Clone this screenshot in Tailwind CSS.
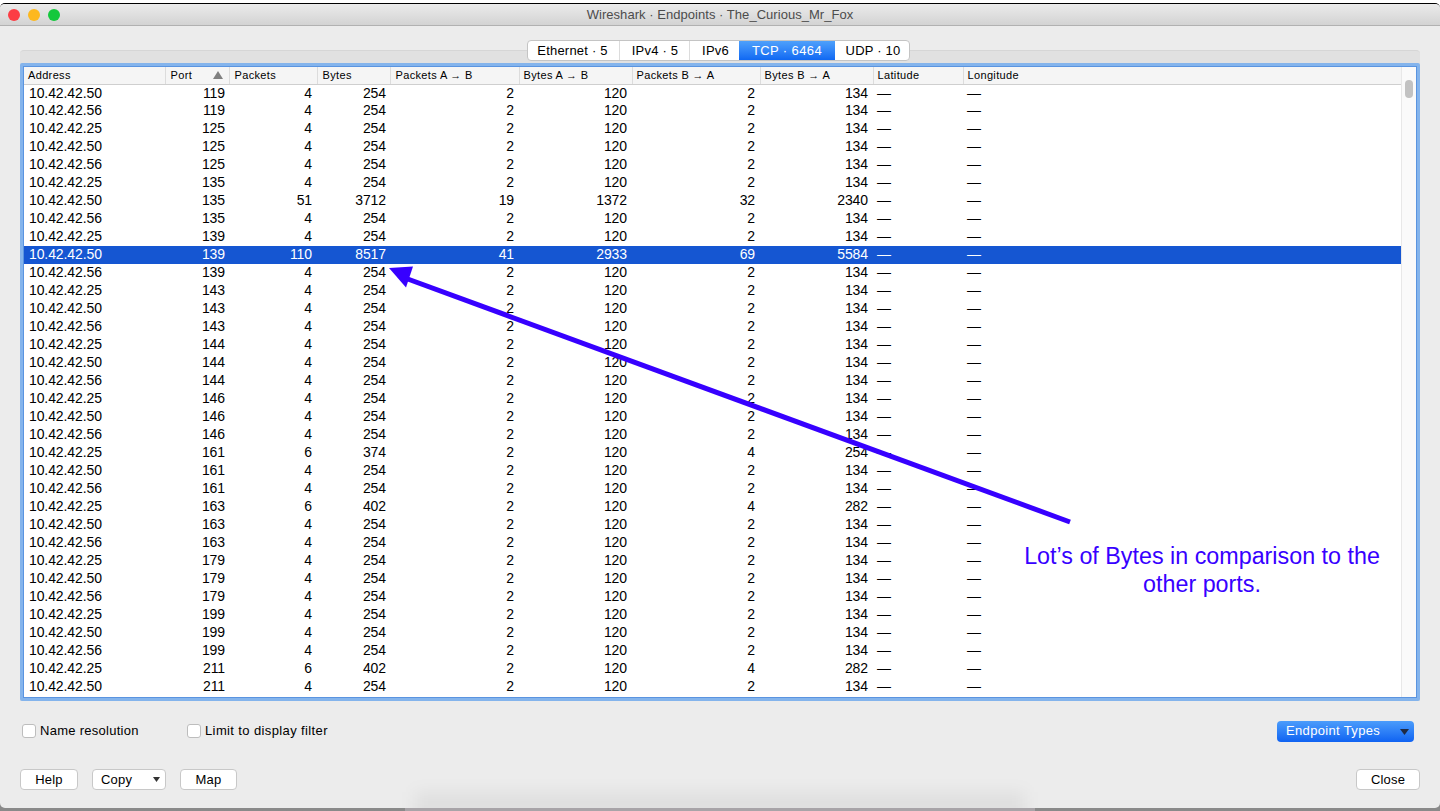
<!DOCTYPE html>
<html lang="en">
<head>
<meta charset="utf-8">
<title>Wireshark · Endpoints · The_Curious_Mr_Fox</title>
<script src="https://cdn.jsdelivr.net/npm/@tailwindcss/browser@4"></script>
</head>
<body class="w-[1440px] h-[811px] overflow-hidden bg-white font-['Liberation_Sans',Arial,sans-serif] text-black">
<div class="relative w-[1440px] h-[811px] pt-[3px] bg-gradient-to-b from-white from-[99%] to-[#8a8a8a] to-[99%]">
  <div class="absolute left-[405px] top-[808px] w-[630px] h-[3px] bg-[#a8a4a8]"></div>
  <div class="relative flex flex-col h-[805px] bg-[#ececec] rounded-t-[5px] rounded-b-[5px] border-t border-black overflow-hidden">
    <header class="relative flex items-center justify-center h-[22px] bg-gradient-to-b from-[#ebebeb] to-[#d3d3d3] border-b border-[#b1b1b1] text-[13px] text-[#4c4c4c] shrink-0">
      <div class="absolute left-[8px] top-[5px] flex gap-[8px]">
        <span class="w-[12px] h-[12px] rounded-full bg-[#fc3d44]"></span>
        <span class="w-[12px] h-[12px] rounded-full bg-[#fdb81e]"></span>
        <span class="w-[12px] h-[12px] rounded-full bg-[#14c83c]"></span>
      </div>
      <span class="tracking-[0.04px]">Wireshark · Endpoints · The_Curious_Mr_Fox</span>
    </header>

    <main class="relative px-[20px] pt-[24px] flex-1">
      <div class="relative h-[651px] rounded-t-[4px] bg-[#e1e1e1] border-t border-[#d6d6d6] pt-[12px]">
        <nav class="absolute left-[507px] top-[-11px] flex h-[21px] rounded-[4px] bg-white border border-[#c4c4c4] text-[13px] leading-[19px] z-10 overflow-hidden whitespace-nowrap">
          <span class="w-[91px] pr-[2px] text-center tracking-[0.2px]">Ethernet · 5</span>
          <span class="w-[70px] pl-[1px] border-l border-[#dcdcdc] text-center tracking-[0.2px]">IPv4 · 5</span>
          <span class="w-[50px] pl-[2px] border-l border-[#dcdcdc] text-center tracking-[0.2px]">IPv6</span>
          <span class="w-[96px] text-center text-white bg-gradient-to-b from-[#4ea0fb] to-[#0f68f3] tracking-[0.4px]">TCP · 6464</span>
          <span class="w-[74px] pl-[2px] text-center tracking-[0.2px]">UDP · 10</span>
        </nav>

        <div class="h-[638px] border-[3px] border-[#84b4ec] rounded-[2px] bg-white">
          <div class="relative h-full border border-[#5a94e0] overflow-hidden">
            <div class="absolute right-0 top-0 bottom-0 w-[15px] bg-[#fafafa] border-l border-[#e8e8e8] z-[5]">
              <div class="absolute left-[3px] top-[13px] w-[8px] h-[18px] rounded-full bg-[#c2c2c2]"></div>
            </div>
            <table class="table-fixed border-collapse w-[1377px] text-[14px] leading-[16px] tracking-[-0.1px] [&_td]:h-[18px] [&_td]:align-top [&_td]:p-0 [&_td]:pr-[5px] [&_td]:text-right [&_td:nth-child(1)]:text-left [&_td:nth-child(1)]:pl-[5px] [&_td:nth-child(2)]:pr-[4px] [&_td:nth-child(4)]:pr-[4px] [&_td:nth-child(n+9)]:text-left [&_td:nth-child(n+9)]:pl-[4px] [&_th]:h-[17px] [&_th]:text-left [&_th]:font-normal [&_th]:text-[11px] [&_th]:pl-[4px] [&_th:nth-child(n+2):nth-child(-n+5)]:pl-[5px] [&_th]:tracking-[0.35px] [&_th]:bg-[#f5f5f5] [&_th]:border-b [&_th]:border-[#cfcfcf] [&_th+th]:border-l [&_th+th]:border-l-[#dcdcdc]">
              <colgroup>
                <col class="w-[141px]"><col class="w-[64px]"><col class="w-[88px]"><col class="w-[73px]"><col class="w-[129px]"><col class="w-[113px]"><col class="w-[128px]"><col class="w-[113px]"><col class="w-[90px]"><col class="w-[438px]">
              </colgroup>
              <thead>
                <tr><th>Address</th><th><span class="flex items-center justify-between pr-[6px]">Port<svg width="10" height="8" viewBox="0 0 10 8"><path d="M5 0 L10 8 L0 8 Z" fill="#808080"/></svg></span></th><th>Packets</th><th>Bytes</th><th>Packets A → B</th><th>Bytes A → B</th><th>Packets B → A</th><th>Bytes B → A</th><th>Latitude</th><th>Longitude</th></tr>
              </thead>
              <tbody>
                <tr><td>10.42.42.50</td><td>119</td><td>4</td><td>254</td><td>2</td><td>120</td><td>2</td><td>134</td><td>—</td><td>—</td></tr>
                <tr><td>10.42.42.56</td><td>119</td><td>4</td><td>254</td><td>2</td><td>120</td><td>2</td><td>134</td><td>—</td><td>—</td></tr>
                <tr><td>10.42.42.25</td><td>125</td><td>4</td><td>254</td><td>2</td><td>120</td><td>2</td><td>134</td><td>—</td><td>—</td></tr>
                <tr><td>10.42.42.50</td><td>125</td><td>4</td><td>254</td><td>2</td><td>120</td><td>2</td><td>134</td><td>—</td><td>—</td></tr>
                <tr><td>10.42.42.56</td><td>125</td><td>4</td><td>254</td><td>2</td><td>120</td><td>2</td><td>134</td><td>—</td><td>—</td></tr>
                <tr><td>10.42.42.25</td><td>135</td><td>4</td><td>254</td><td>2</td><td>120</td><td>2</td><td>134</td><td>—</td><td>—</td></tr>
                <tr><td>10.42.42.50</td><td>135</td><td>51</td><td>3712</td><td>19</td><td>1372</td><td>32</td><td>2340</td><td>—</td><td>—</td></tr>
                <tr><td>10.42.42.56</td><td>135</td><td>4</td><td>254</td><td>2</td><td>120</td><td>2</td><td>134</td><td>—</td><td>—</td></tr>
                <tr><td>10.42.42.25</td><td>139</td><td>4</td><td>254</td><td>2</td><td>120</td><td>2</td><td>134</td><td>—</td><td>—</td></tr>
                <tr class="bg-[#1556d2] text-white"><td>10.42.42.50</td><td>139</td><td>110</td><td>8517</td><td>41</td><td>2933</td><td>69</td><td>5584</td><td>—</td><td>—</td></tr>
                <tr><td>10.42.42.56</td><td>139</td><td>4</td><td>254</td><td>2</td><td>120</td><td>2</td><td>134</td><td>—</td><td>—</td></tr>
                <tr><td>10.42.42.25</td><td>143</td><td>4</td><td>254</td><td>2</td><td>120</td><td>2</td><td>134</td><td>—</td><td>—</td></tr>
                <tr><td>10.42.42.50</td><td>143</td><td>4</td><td>254</td><td>2</td><td>120</td><td>2</td><td>134</td><td>—</td><td>—</td></tr>
                <tr><td>10.42.42.56</td><td>143</td><td>4</td><td>254</td><td>2</td><td>120</td><td>2</td><td>134</td><td>—</td><td>—</td></tr>
                <tr><td>10.42.42.25</td><td>144</td><td>4</td><td>254</td><td>2</td><td>120</td><td>2</td><td>134</td><td>—</td><td>—</td></tr>
                <tr><td>10.42.42.50</td><td>144</td><td>4</td><td>254</td><td>2</td><td>120</td><td>2</td><td>134</td><td>—</td><td>—</td></tr>
                <tr><td>10.42.42.56</td><td>144</td><td>4</td><td>254</td><td>2</td><td>120</td><td>2</td><td>134</td><td>—</td><td>—</td></tr>
                <tr><td>10.42.42.25</td><td>146</td><td>4</td><td>254</td><td>2</td><td>120</td><td>2</td><td>134</td><td>—</td><td>—</td></tr>
                <tr><td>10.42.42.50</td><td>146</td><td>4</td><td>254</td><td>2</td><td>120</td><td>2</td><td>134</td><td>—</td><td>—</td></tr>
                <tr><td>10.42.42.56</td><td>146</td><td>4</td><td>254</td><td>2</td><td>120</td><td>2</td><td>134</td><td>—</td><td>—</td></tr>
                <tr><td>10.42.42.25</td><td>161</td><td>6</td><td>374</td><td>2</td><td>120</td><td>4</td><td>254</td><td>—</td><td>—</td></tr>
                <tr><td>10.42.42.50</td><td>161</td><td>4</td><td>254</td><td>2</td><td>120</td><td>2</td><td>134</td><td>—</td><td>—</td></tr>
                <tr><td>10.42.42.56</td><td>161</td><td>4</td><td>254</td><td>2</td><td>120</td><td>2</td><td>134</td><td>—</td><td>—</td></tr>
                <tr><td>10.42.42.25</td><td>163</td><td>6</td><td>402</td><td>2</td><td>120</td><td>4</td><td>282</td><td>—</td><td>—</td></tr>
                <tr><td>10.42.42.50</td><td>163</td><td>4</td><td>254</td><td>2</td><td>120</td><td>2</td><td>134</td><td>—</td><td>—</td></tr>
                <tr><td>10.42.42.56</td><td>163</td><td>4</td><td>254</td><td>2</td><td>120</td><td>2</td><td>134</td><td>—</td><td>—</td></tr>
                <tr><td>10.42.42.25</td><td>179</td><td>4</td><td>254</td><td>2</td><td>120</td><td>2</td><td>134</td><td>—</td><td>—</td></tr>
                <tr><td>10.42.42.50</td><td>179</td><td>4</td><td>254</td><td>2</td><td>120</td><td>2</td><td>134</td><td>—</td><td>—</td></tr>
                <tr><td>10.42.42.56</td><td>179</td><td>4</td><td>254</td><td>2</td><td>120</td><td>2</td><td>134</td><td>—</td><td>—</td></tr>
                <tr><td>10.42.42.25</td><td>199</td><td>4</td><td>254</td><td>2</td><td>120</td><td>2</td><td>134</td><td>—</td><td>—</td></tr>
                <tr><td>10.42.42.50</td><td>199</td><td>4</td><td>254</td><td>2</td><td>120</td><td>2</td><td>134</td><td>—</td><td>—</td></tr>
                <tr><td>10.42.42.56</td><td>199</td><td>4</td><td>254</td><td>2</td><td>120</td><td>2</td><td>134</td><td>—</td><td>—</td></tr>
                <tr><td>10.42.42.25</td><td>211</td><td>6</td><td>402</td><td>2</td><td>120</td><td>4</td><td>282</td><td>—</td><td>—</td></tr>
                <tr><td>10.42.42.50</td><td>211</td><td>4</td><td>254</td><td>2</td><td>120</td><td>2</td><td>134</td><td>—</td><td>—</td></tr>
              </tbody>
            </table>
          </div>
        </div>
      </div>

      <div class="flex items-center justify-between h-[22px] mt-[19px] pl-[2px] pr-[6px] text-[13px]">
        <div class="flex items-center">
          <label class="flex items-center gap-[4px] w-[165px] tracking-[0.27px]"><span class="w-[14px] h-[14px] rounded-[3px] bg-white border border-[#bdbdbd]"></span>Name resolution</label>
          <label class="flex items-center gap-[4px] tracking-[0.38px]"><span class="w-[14px] h-[14px] rounded-[3px] bg-white border border-[#bdbdbd]"></span>Limit to display filter</label>
        </div>
        <button class="relative w-[137px] h-[21px] rounded-[4px] bg-gradient-to-b from-[#4b9cfb] to-[#0f62f2] text-white text-left pl-[9px] tracking-[0.34px]">Endpoint Types<svg class="absolute right-[5px] top-[8px]" width="9" height="6" viewBox="0 0 9 6"><path d="M0 0 L9 0 L4.500 6 Z" fill="#1f2a44"/></svg></button>
      </div>

      <div class="flex items-center justify-between h-[21px] mt-[27px] text-[13px] tracking-[0.2px]">
        <div class="flex items-center gap-[14px]">
          <button class="w-[58px] h-[21px] rounded-[4px] bg-white border border-[#c8c8c8]">Help</button>
          <button class="relative w-[74px] h-[21px] rounded-[4px] bg-white border border-[#c8c8c8] text-left pl-[8px]">Copy<svg class="absolute right-[5px] top-[7px]" width="7" height="5" viewBox="0 0 7 5"><path d="M0 0 L7 0 L3.500 5 Z" fill="#333"/></svg></button>
          <button class="w-[57px] h-[21px] rounded-[4px] bg-white border border-[#c8c8c8]">Map</button>
        </div>
        <button class="w-[64px] h-[21px] rounded-[4px] bg-white border border-[#c8c8c8]">Close</button>
      </div>
    </main>
    <div class="absolute left-[415px] top-[788px] w-[610px] h-[60px] bg-black/[0.05] blur-[8px] pointer-events-none"></div>
  </div>

  <svg class="absolute left-0 top-0 z-20 pointer-events-none" width="1440" height="811" viewBox="0 0 1440 811" aria-hidden="true">
    <line x1="1070" y1="522" x2="405" y2="278" stroke="#3700ff" stroke-width="5"/>
    <path d="M389 268 L413 266.500 L406 287.500 Z" fill="#3700ff"/>
  </svg>
  <p class="absolute left-[1010px] top-[542px] w-[384px] text-center text-[23.3px] leading-[28px] text-[#3700ff] z-20">Lot’s of Bytes in comparison to the other ports.</p>
</div>
</body>
</html>
